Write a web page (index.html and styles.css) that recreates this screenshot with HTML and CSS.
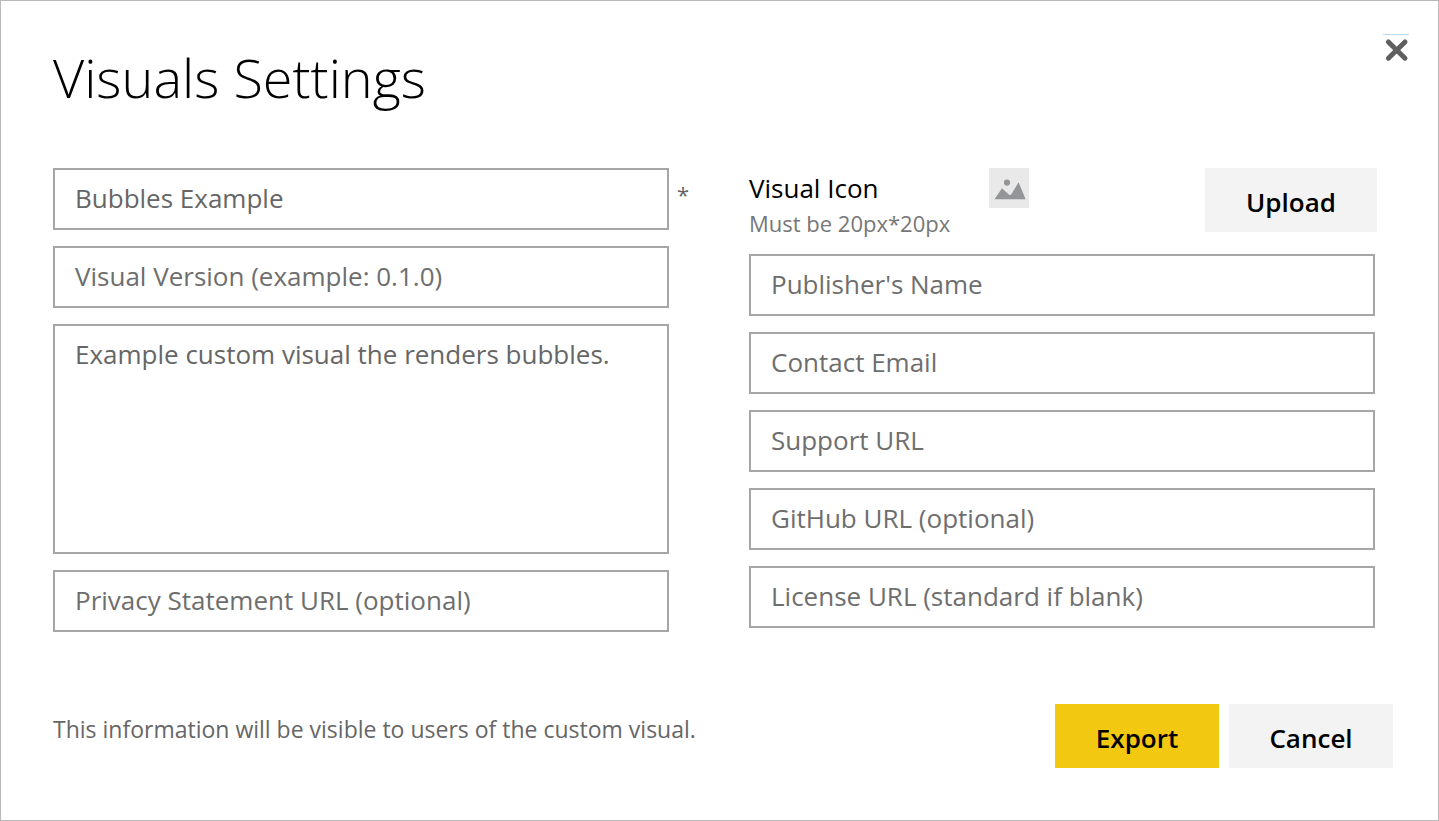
FILE: index.html
```html
<!DOCTYPE html>
<html lang="en">
<head>
  <meta charset="utf-8">
  <meta name="viewport" content="width=device-width, initial-scale=1">
  <title>Visuals Settings</title>
  <link rel="stylesheet" href="styles.css">
</head>
<body>
  <main class="dialog" role="dialog" aria-labelledby="dialog-title">
    <header class="dialog-header">
      <h1 class="dialog-title" id="dialog-title">Visuals Settings</h1>
      <button class="close-button" type="button" aria-label="Close">
        <svg class="close-icon" viewBox="0 0 26 30" aria-hidden="true">
          <path d="M5.4 7 L22 23.2 M22 7 L5.4 23.2" fill="none" stroke="#5f5f5f" stroke-width="5" stroke-linecap="round"/>
        </svg>
      </button>
    </header>

    <form class="settings-form">
      <div class="columns">
        <div class="column">
          <div class="field required">
            <input class="control" type="text" aria-label="Visual name" value="Bubbles Example" required>
            <span class="required-mark" aria-hidden="true">*</span>
          </div>
          <input class="control" type="text" aria-label="Visual version" placeholder="Visual Version (example: 0.1.0)">
          <textarea class="control control-multiline" aria-label="Description">Example custom visual the renders bubbles.</textarea>
          <input class="control" type="url" aria-label="Privacy statement URL" placeholder="Privacy Statement URL (optional)">
        </div>

        <div class="column">
          <div class="icon-row">
            <div class="icon-text">
              <span class="icon-label" id="icon-label">Visual Icon</span>
              <span class="icon-hint" id="icon-hint">Must be 20px*20px</span>
            </div>
            <svg class="icon-preview" viewBox="0 0 40 40" aria-hidden="true">
              <rect width="40" height="40" fill="#e9e9e9"/>
              <circle cx="18" cy="14.6" r="3.1" fill="#939598"/>
              <path d="M5.5 31.2 L13 20.2 L20.4 27 L22.2 26.4 L29.6 14.2 L36.6 31.2 Z" fill="#939598"/>
            </svg>
            <button class="button button-upload" type="button" aria-describedby="icon-label icon-hint">Upload</button>
          </div>
          <input class="control" type="text" aria-label="Publisher's name" placeholder="Publisher's Name">
          <input class="control" type="email" aria-label="Contact email" placeholder="Contact Email">
          <input class="control" type="url" aria-label="Support URL" placeholder="Support URL">
          <input class="control" type="url" aria-label="GitHub URL" placeholder="GitHub URL (optional)">
          <input class="control" type="url" aria-label="License URL" placeholder="License URL (standard if blank)">
        </div>
      </div>

      <footer class="dialog-footer">
        <p class="notice">This information will be visible to users of the custom visual.</p>
        <div class="actions">
          <button class="button button-primary" type="submit">Export</button>
          <button class="button" type="button">Cancel</button>
        </div>
      </footer>
    </form>
  </main>
</body>
</html>
```
FILE: styles.css
```css
* {
  box-sizing: border-box;
}

body {
  margin: 0;
  background: #fff;
  color: #000;
  font-family: "Segoe UI", "Open Sans", "Noto Sans", sans-serif;
}

.dialog {
  min-height: 100vh;
  padding: 32px 28px 52px 52px;
  border: 1px solid #b9b9b9;
}

.dialog-header {
  display: flex;
  justify-content: space-between;
  align-items: flex-start;
  margin-bottom: 49px;
}

.dialog-title {
  margin: 0;
  padding-top: 2px;
  font-size: 54px;
  font-weight: 300;
  line-height: 84px;
}

.close-button {
  display: flex;
  margin: 1px 1px 0 0;
  padding: 0;
  border: 0;
  border-top: 1px solid #b9dcf3;
  background: none;
  cursor: pointer;
}

.close-icon {
  width: 26px;
  height: 30px;
}

.columns {
  display: grid;
  grid-template-columns: 616fr 626fr;
  gap: 80px;
  margin-right: 35px;
}

.column {
  display: flex;
  flex-direction: column;
  gap: 16px;
}

.field {
  position: relative;
}

.control {
  display: block;
  width: 100%;
  height: 62px;
  padding: 6px 20px 8px;
  border: 2px solid #a6a6a6;
  border-radius: 0;
  background: #fff;
  color: #666;
  font-family: inherit;
  font-size: 26px;
  line-height: 40px;
}

.control::placeholder {
  color: #6e6e6e;
  opacity: 1;
}

.control-multiline {
  height: 230px;
  padding-top: 8px;
  resize: none;
}

.required-mark {
  position: absolute;
  top: 6px;
  left: 100%;
  margin-left: 8px;
  color: #666;
  font-size: 22px;
  line-height: 40px;
}

.icon-row {
  display: flex;
  align-items: flex-start;
  height: 70px;
  margin-right: -2px;
}

.icon-text {
  display: flex;
  flex-direction: column;
  width: 240px;
}

.icon-label {
  font-size: 26px;
  line-height: 40px;
}

.icon-hint {
  color: #777;
  font-size: 22px;
  line-height: 30px;
}

.icon-preview {
  width: 40px;
  height: 40px;
}

.button {
  min-width: 164px;
  height: 64px;
  padding: 4px 20px 0;
  border: 0;
  border-radius: 0;
  background: #f3f3f3;
  color: #000;
  font-family: inherit;
  font-size: 26px;
  font-weight: 600;
  line-height: 40px;
  cursor: pointer;
}

.button-upload {
  min-width: 172px;
  margin-left: auto;
}

.button-primary {
  background: #f2c811;
}

.dialog-footer {
  display: flex;
  justify-content: space-between;
  align-items: flex-start;
  margin: 72px 17px 0 0;
}

.notice {
  margin: 5px 0 0;
  color: #666;
  font-size: 23px;
  line-height: 40px;
}

.actions {
  display: flex;
  gap: 10px;
}
```
